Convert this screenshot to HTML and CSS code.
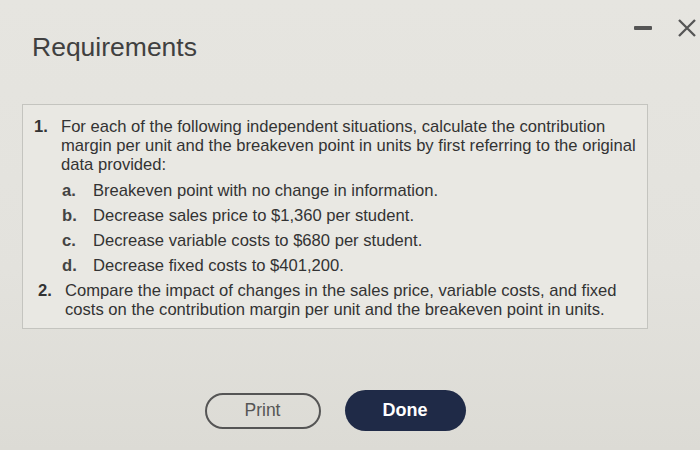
FILE: index.html
```html
<!DOCTYPE html>
<html>
<head>
<meta charset="utf-8">
<link rel="stylesheet" href="styles.css">
</head>
<body>
<div class="page">
  <header class="header">
    <h1 class="title">Requirements</h1>
    <div class="controls">
      <span class="minimize"></span>
      <svg class="close" width="20" height="20" viewBox="0 0 20 20"><path d="M2 2 L18 18 M18 2 L2 18" stroke="#555" stroke-width="2.3" fill="none"/></svg>
    </div>
  </header>
  <section class="box">
    <div class="item">
      <span class="num">1.</span>
      <div class="body">
        <p class="text">For each of the following independent situations, calculate the contribution margin per unit and the breakeven point in units by first referring to the original data provided:</p>
        <div class="sub"><span class="letter">a.</span><span>Breakeven point with no change in information.</span></div>
        <div class="sub"><span class="letter">b.</span><span>Decrease sales price to $1,360 per student.</span></div>
        <div class="sub"><span class="letter">c.</span><span>Decrease variable costs to $680 per student.</span></div>
        <div class="sub"><span class="letter">d.</span><span>Decrease fixed costs to $401,200.</span></div>
      </div>
    </div>
    <div class="item item-two">
      <span class="num">2.</span>
      <div class="body">
        <p class="text">Compare the impact of changes in the sales price, variable costs, and fixed costs on the contribution margin per unit and the breakeven point in units.</p>
      </div>
    </div>
  </section>
  <footer class="actions">
    <button class="btn btn-print">Print</button>
    <button class="btn btn-done">Done</button>
  </footer>
</div>
</body>
</html>
```
FILE: styles.css
```css
html, body {
  margin: 0;
  padding: 0;
}
body {
  width: 700px;
  height: 450px;
  overflow: hidden;
  font-family: "Liberation Sans", Arial, sans-serif;
  color: #333;
}
.page {
  width: 700px;
  height: 450px;
  background: linear-gradient(180deg, #e6e5e0 0%, #e3e2dd 60%, #dcdbd5 100%);
  display: flex;
  flex-direction: column;
}
.header {
  display: flex;
  justify-content: space-between;
  align-items: flex-start;
  height: 104px;
  padding: 0 3px 0 32px;
  box-sizing: border-box;
}
.title {
  margin: 30px 0 0 0;
  font-size: 26.5px;
  font-weight: normal;
  color: #404040;
  line-height: 34px;
}
.controls {
  display: flex;
  align-items: center;
  gap: 25px;
  margin-top: 18px;
}
.minimize {
  display: block;
  width: 18px;
  height: 4px;
  background: #555;
  border-radius: 1px;
}
.close {
  display: block;
}
.box {
  margin-left: 22px;
  width: 626px;
  box-sizing: border-box;
  border: 1px solid #c4c4bf;
  background: #e9e8e3;
  padding: 12px 0 9px 11px;
  font-size: 16.6px;
  line-height: 19px;
  color: #333;
}
.item {
  display: grid;
  grid-template-columns: 27px 1fr;
}
.item-two {
  margin-top: 6px;
  padding-left: 4px;
}
.num {
  font-weight: bold;
  color: #333;
}
.text {
  margin: 0;
  width: 578px;
}
.sub {
  display: grid;
  grid-template-columns: 31px 1fr;
  margin-top: 6px;
  padding-left: 1px;
}
.sub:first-of-type {
  margin-top: 7px;
}
.letter {
  font-weight: bold;
  color: #444;
}
.actions {
  display: flex;
  justify-content: center;
  align-items: center;
  gap: 24px;
  margin-top: 61px;
  padding-right: 30px;
}
.btn {
  font-family: "Liberation Sans", Arial, sans-serif;
  font-size: 17.5px;
  border-radius: 22px;
  box-sizing: border-box;
  padding: 0;
}
.btn-print {
  width: 116px;
  height: 36px;
  border: 2px solid #555;
  background: transparent;
  color: #555;
}
.btn-done {
  width: 121px;
  height: 41px;
  border: none;
  background: #1f2a47;
  color: #fff;
  font-weight: bold;
  font-size: 18px;
}
```
